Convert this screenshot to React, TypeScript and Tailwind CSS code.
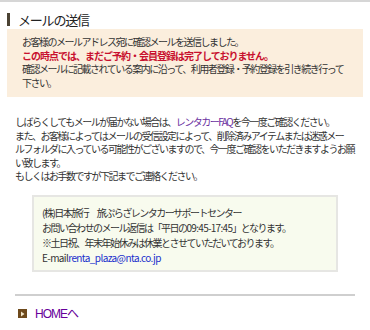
import React from "react";

const jp = {
  fontFamily: '"Noto Sans CJK JP", "Liberation Sans", sans-serif',
};

export default function App() {
  return (
    <div
      style={jp}
      className="w-[370px] h-[330px] bg-white border-t-2 border-[#d6d6d6] text-[#333] overflow-hidden"
    >
      {/* heading */}
      <div className="flex items-center gap-[8px] pl-[7px] pt-[8px] h-[27px]">
        <span className="w-[3px] h-[13px] bg-[#4b4334]" />
        <h1 className="text-[13px] leading-none text-[#222] tracking-[-1.2px]">
          メールの送信
        </h1>
      </div>

      {/* notice */}
      <div className="mx-[7px] bg-[#fbeedd] pl-[15px] pt-[6px] pb-[8px] text-[10px] leading-[13.5px] whitespace-nowrap tracking-[-1.5px]">
        <p>お客様のメールアドレス宛に確認メールを送信しました。</p>
        <p className="font-bold text-[#c8102e] tracking-[-1px]">
          この時点では、まだご予約・会員登録は完了しておりません。
        </p>
        <p>確認メールに記載されている案内に沿って、利用者登録・予約登録を引き続き行って</p>
        <p>下さい。</p>
      </div>

      {/* body */}
      <div className="px-[15px] mt-[18px] text-[10px] leading-[13.5px] whitespace-nowrap tracking-[-1.5px]">
        <p>
          しばらくしてもメールが届かない場合は、
          <a className="text-[#6a2fa0]">レンタカーFAQ</a>
          を今一度ご確認ください。
        </p>
        <p>また、お客様によってはメールの受信設定によって、削除済みアイテムまたは迷惑メー</p>
        <p>ルフォルダに入っている可能性がございますので、今一度ご確認をいただきますようお願</p>
        <p>い致します。</p>
        <p>もしくはお手数ですが下記までご連絡ください。</p>
      </div>

      {/* contact */}
      <div className="ml-[32px] mt-[12px] w-[306px] h-[77px] bg-[#f8fbee] border-2 border-[#e6e6e3] pl-[8px] pt-[8px] text-[10px] leading-[15px] whitespace-nowrap tracking-[-1.5px]">
        <p>(株)日本旅行&#12288;旅ぷらざレンタカーサポートセンター</p>
        <p>
          お問い合わせのメール返信は「平日の
          <span className="tracking-[-0.7px]">09:45-17:45</span>
          」となります。
        </p>
        <p>※土日祝、年末年始休みは休業とさせていただいております。</p>
        <p className="tracking-[-0.6px]">
          E-mail<a className="text-[#1a2fcc]">renta_plaza@nta.co.jp</a>
        </p>
      </div>

      <hr className="mx-[15px] mt-[22px] border-t-2 border-[#cfcfcf]" />

      {/* home link */}
      <div className="flex items-center gap-[8px] pl-[18px] mt-[12px]">
        <span className="w-[9px] h-[9px] bg-[#6e4a1c] flex items-center justify-center">
          <svg width="5" height="6" viewBox="0 0 5 6">
            <path d="M1 0.5 L4.5 3 L1 5.5 Z" fill="#f2e6c8" />
          </svg>
        </span>
        <a
          className="text-[12px] leading-none text-[#660099] tracking-[-1px]"
          style={{ fontFamily: '"Liberation Sans", "Noto Sans CJK JP", sans-serif' }}
        >
          HOMEへ
        </a>
      </div>
    </div>
  );
}
